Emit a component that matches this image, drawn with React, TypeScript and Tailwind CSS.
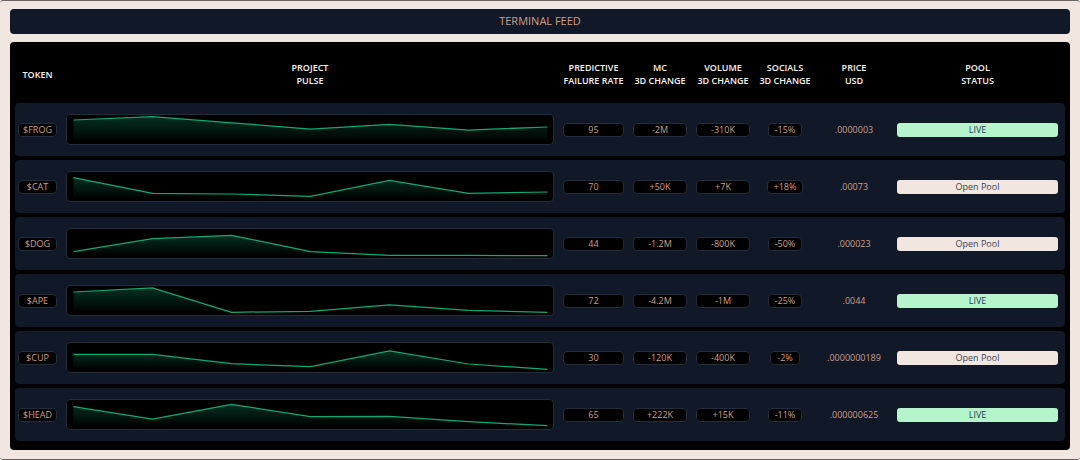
const rows = [
  { t: "$FROG", p: [6, 2.7, 8.8, 15, 10.3, 16, 13], f: "95", mc: "-2M", v: "-310K", s: "-15%", price: ".0000003", live: true },
  { t: "$CAT", p: [6.7, 22.3, 23, 25.3, 9.3, 22.3, 21], f: "70", mc: "+50K", v: "+7K", s: "+18%", price: ".00073", live: false },
  { t: "$DOG", p: [23.7, 10.7, 7.3, 23.7, 27.3, 27.3, 27.7], f: "44", mc: "-1.2M", v: "-800K", s: "-50%", price: ".000023", live: false },
  { t: "$APE", p: [7, 3, 27.3, 26.3, 20, 25.3, 27.3], f: "72", mc: "-4.2M", v: "-1M", s: "-25%", price: ".0044", live: true },
  { t: "$CUP", p: [12.3, 12.3, 21.7, 24.7, 9, 22, 27.3], f: "30", mc: "-120K", v: "-400K", s: "-2%", price: ".0000000189", live: false },
  { t: "$HEAD", p: [7.7, 20, 5.3, 17.7, 17.3, 22.7, 26.7], f: "65", mc: "+222K", v: "+15K", s: "-11%", price: ".000000625", live: true },
];

const grid = "grid grid-cols-[39px_488px_61px_54px_54px_52px_68px_161px] gap-x-[9px] items-center";
const pill = "h-[14px] flex items-center justify-center rounded-[4px] bg-black border border-[#222c3d] text-[9px] leading-none text-[#cf9f88]";

function Spark({ p, id }: { p: number[]; id: string }) {
  const pts = p.map((y, i) => `${6.5 + i * 79},${y}`).join(" ");
  return (
    <svg width="486" height="29" viewBox="0 1 486 29" className="block">
      <defs>
        <linearGradient id={id} x1="0" y1="0" x2="0" y2="1">
          <stop offset="0" stopColor="#10b981" stopOpacity="0.26" />
          <stop offset="1" stopColor="#10b981" stopOpacity="0" />
        </linearGradient>
      </defs>
      <polygon points={`6.5,28 ${pts} 480.5,28`} fill={`url(#${id})`} />
      <polyline points={pts} fill="none" stroke="#10a877" strokeWidth="1.25" />
    </svg>
  );
}

function Head({ a, b }: { a: string; b?: string }) {
  return (
    <div className="text-center text-[9px] leading-[12.6px] font-semibold text-[#fbf3ef] whitespace-nowrap pt-[5px]">
      <div>{a}</div>
      {b && <div>{b}</div>}
    </div>
  );
}

export default function App() {
  return (
    <div
      className="h-[460px] w-[1080px] overflow-hidden bg-[#f2e6e1] border-t border-b border-[#6b6260] rounded-[3px] px-[10px] pt-[8px] flex flex-col gap-[8px]"
      style={{ fontFamily: '"Open Sans", "Noto Sans", sans-serif' }}
    >
      <div className="h-[25px] shrink-0 rounded-[4px] bg-[#111827] flex items-center justify-center text-[11px] text-[#cf9f88]">
        TERMINAL FEED
      </div>
      <div className="h-[408px] shrink-0 rounded-[4px] bg-black px-[5px] flex flex-col">
        <div className={`${grid} h-[61px] shrink-0 px-[3px]`}>
          <Head a="TOKEN" />
          <Head a="PROJECT" b="PULSE" />
          <Head a="PREDICTIVE" b="FAILURE RATE" />
          <Head a="MC" b="3D CHANGE" />
          <Head a="VOLUME" b="3D CHANGE" />
          <Head a="SOCIALS" b="3D CHANGE" />
          <Head a="PRICE" b="USD" />
          <Head a="POOL" b="STATUS" />
        </div>
        <div className="flex flex-col gap-[4px]">
          {rows.map((r, i) => (
            <div key={r.t} className={`${grid} h-[53px] px-[3px] rounded-[4px] bg-[#111827]`}>
              <div className={pill}>{r.t}</div>
              <div className="h-[31px] rounded-[4px] bg-black border border-[#222c3d]">
                <Spark p={r.p} id={`g${i}`} />
              </div>
              <div className={pill}>{r.f}</div>
              <div className={pill}>{r.mc}</div>
              <div className={pill}>{r.v}</div>
              <div className="flex justify-center">
                <div className={`${pill} px-[6px]`}>{r.s}</div>
              </div>
              <div className="text-center text-[9px] leading-none text-[#cf9f88]">{r.price}</div>
              <div
                className={`h-[14px] flex items-center justify-center rounded-[3px] text-[9px] leading-none ${
                  r.live ? "bg-[#b6f5cb] text-[#1f3a5f]" : "bg-[#f2e6e1] text-[#374151]"
                }`}
              >
                {r.live ? "LIVE" : "Open Pool"}
              </div>
            </div>
          ))}
        </div>
      </div>
    </div>
  );
}
